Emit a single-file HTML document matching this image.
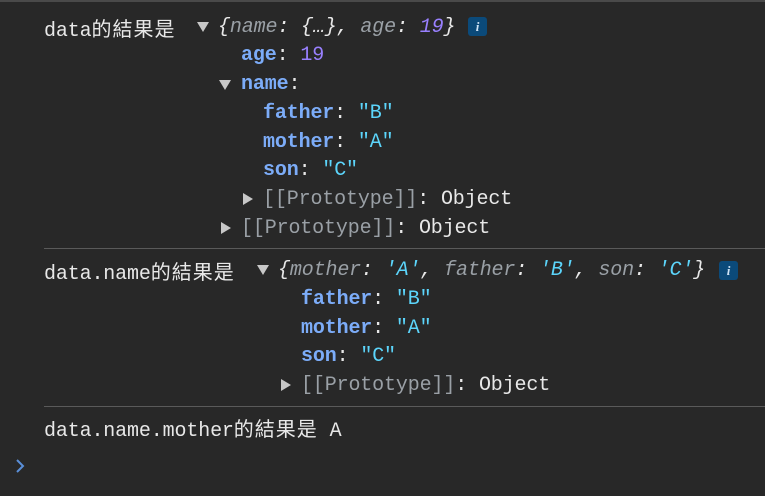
<!DOCTYPE html>
<html><head><meta charset="utf-8"><style>
html,body{margin:0;padding:0;background:#282828;width:765px;height:496px;overflow:hidden;position:relative}
.top{position:absolute;left:0;top:0;width:765px;height:2px;background:#4a4a4a}
.l{position:absolute;height:28px;line-height:28px;white-space:pre;font-family:"Liberation Mono","Noto Sans CJK TC",monospace;font-size:20px;letter-spacing:-0.14px;color:#e8e8e8}
.c{font-family:"Noto Sans CJK TC",sans-serif;letter-spacing:1px;font-size:20px}
.k{color:#7cacf8;font-weight:bold}
.n{color:#9980ff}
.s{color:#5cd5fb}
.g{color:#9aa0a6;font-style:italic}
.p{color:#9aa0a6}
.i{font-style:italic}
.tri{position:absolute;width:0;height:0}
.down{border-left:6px solid transparent;border-right:6px solid transparent;border-top:10px solid #c8c8c8}
.right{border-top:6px solid transparent;border-bottom:6px solid transparent;border-left:10px solid #c8c8c8}
.sep{position:absolute;left:44px;right:0;height:1px;background:#5a5a5a}
.info{position:absolute;width:19px;height:19px;background:#0b4a7a;border-radius:3px;color:#cfe3f5;font:italic bold 13px "Liberation Serif",serif;text-align:center;line-height:19px}
</style></head><body>
<div class="top"></div>

<div class="l" style="left:44px;top:14px">data<span class="c">的結果是</span></div>
<div class="tri down" style="left:197px;top:22px"></div>
<div class="l i" style="left:218px;top:14px">{<span class="g">name</span>: {…}, <span class="g">age</span>: <span class="n">19</span>}</div>
<div class="info" style="left:468px;top:17px">i</div>

<div class="l" style="left:241px;top:42px"><span class="k">age</span>: <span class="n">19</span></div>
<div class="tri down" style="left:219px;top:80px"></div>
<div class="l" style="left:241px;top:71px"><span class="k">name</span>:</div>
<div class="l" style="left:263px;top:100px"><span class="k">father</span>: <span class="s">"B"</span></div>
<div class="l" style="left:263px;top:129px"><span class="k">mother</span>: <span class="s">"A"</span></div>
<div class="l" style="left:263px;top:157px"><span class="k">son</span>: <span class="s">"C"</span></div>
<div class="tri right" style="left:243px;top:193px"></div>
<div class="l" style="left:263px;top:186px"><span class="p">[[Prototype]]</span>: Object</div>
<div class="tri right" style="left:221px;top:222px"></div>
<div class="l" style="left:241px;top:215px"><span class="p">[[Prototype]]</span>: Object</div>

<div class="sep" style="top:248px"></div>

<div class="l" style="left:44px;top:257px">data.name<span class="c">的結果是</span></div>
<div class="tri down" style="left:257px;top:265px"></div>
<div class="l i" style="left:278px;top:257px">{<span class="g">mother</span>: <span class="s">'A'</span>, <span class="g">father</span>: <span class="s">'B'</span>, <span class="g">son</span>: <span class="s">'C'</span>}</div>
<div class="info" style="left:719px;top:261px">i</div>
<div class="l" style="left:301px;top:286px"><span class="k">father</span>: <span class="s">"B"</span></div>
<div class="l" style="left:301px;top:315px"><span class="k">mother</span>: <span class="s">"A"</span></div>
<div class="l" style="left:301px;top:343px"><span class="k">son</span>: <span class="s">"C"</span></div>
<div class="tri right" style="left:281px;top:379px"></div>
<div class="l" style="left:301px;top:372px"><span class="p">[[Prototype]]</span>: Object</div>

<div class="sep" style="top:406px"></div>

<div class="l" style="left:44px;top:414px">data.name.mother<span class="c">的結果是</span> A</div>

<svg style="position:absolute;left:14px;top:457px" width="12" height="18" viewBox="0 0 12 18"><path d="M3 3 L9 9 L3 15" fill="none" stroke="#5a8fd8" stroke-width="2"/></svg>
</body></html>
